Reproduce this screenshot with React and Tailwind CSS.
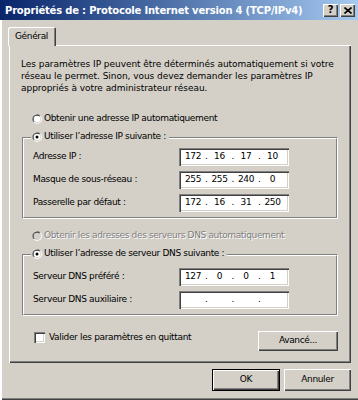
const raised = 'shadow-[inset_1px_1px_0_#fff,inset_-1px_-1px_0_#404040,inset_-2px_-2px_0_#808080]';
const sunken = 'shadow-[inset_1px_1px_0_#808080,inset_2px_2px_0_#404040,inset_-1px_-1px_0_#fff,inset_-2px_-2px_0_#d4d0c8]';

function Radio({ checked, disabled }) {
  return (
    <svg width="10" height="10" viewBox="0 0 12 12" className="shrink-0">
      <circle cx="6" cy="6" r="6" fill="#fff" />
      <path d="M1.76 10.24A6 6 0 0 1 10.24 1.76Z" fill="#808080" />
      <circle cx="6" cy="6" r="5" fill="#d4d0c8" />
      <path d="M2.46 9.54A5 5 0 0 1 9.54 2.46Z" fill="#404040" />
      <circle cx="6" cy="6" r="4" fill={disabled ? '#d4d0c8' : '#fff'} />
      {checked && <circle cx="6" cy="6" r="1.8" fill="#000" />}
    </svg>
  );
}

function IpField({ parts = ['', '', '', ''] }) {
  return (
    <div className={`flex h-[18px] w-[110px] items-center bg-white pl-[3px] ${sunken}`}>
      {parts.map((p, i) => (
        <div key={i} className="flex items-center">
          <span className="w-[22px] text-center">{p}</span>
          {i < 3 && <span className="w-[4.5px] text-center">.</span>}
        </div>
      ))}
    </div>
  );
}

function Row({ label, parts }) {
  return (
    <div className="flex h-[18px] items-center">
      <span className="w-[155px] pl-[9px]">{label}</span>
      <IpField parts={parts} />
    </div>
  );
}

function Group({ legend, children, className = '' }) {
  return (
    <div className={`ml-[1px] w-[316px] border border-t-[#808080] border-l-[#808080] border-r-white border-b-white ${className}`}>
      <div className="flex flex-col border border-t-white border-l-white border-r-[#808080] border-b-[#808080] pb-[5px]">
        <div className="-mt-[9px] ml-[7px] flex h-[14px] w-fit items-center gap-[2px] bg-[#d4d0c8] pl-[1px] pr-[3px]">
          <Radio checked />
          <span>{legend}</span>
        </div>
        {children}
      </div>
    </div>
  );
}

function TitleButton({ children }) {
  return (
    <div className={`flex h-[13px] w-[15px] items-center justify-center bg-[#d4d0c8] ${raised}`}>
      {children}
    </div>
  );
}

export default function App() {
  return (
    <div className="flex h-[400px] w-[358px] flex-col overflow-hidden bg-[#d4d0c8] font-['DejaVu_Sans',sans-serif] text-[9px] tracking-[-0.35px] text-black">
      <div className="flex h-[20px] shrink-0 items-center justify-between bg-linear-to-r from-[#0a246a] to-[#a6caf0] pl-[5px] pr-[3px]">
        <span className="text-[10px] font-bold tracking-[-0.2px] whitespace-nowrap text-white">
          Propriétés de : Protocole Internet version 4 (TCP/IPv4)
        </span>
        <div className="flex gap-[2px]">
          <TitleButton>
            <span className="text-[10px] leading-none font-bold">?</span>
          </TitleButton>
          <TitleButton>
            <svg width="8" height="7" viewBox="0 0 8 7">
              <path d="M0.5 0.5L7.5 6.5M7.5 0.5L0.5 6.5" stroke="#000" strokeWidth="1.6" />
            </svg>
          </TitleButton>
        </div>
      </div>

      <div className="flex flex-1 flex-col pt-[7px] pl-[9px] shadow-[inset_2px_0_0_#fff,inset_1px_0_0_#d4d0c8,inset_0_-1px_0_#404040,inset_0_-2px_0_#808080]">
        <div className="relative z-10 -mb-[1px] -ml-[1px] flex h-[19px] w-[48px] items-center rounded-t-[2px] bg-[#d4d0c8] pl-[7px] shadow-[inset_1px_1px_0_#fff,inset_-1px_0_0_#404040,inset_-2px_0_0_#808080]">
          Général
        </div>

        <div className={`flex h-[318px] w-[342px] flex-col pt-[13px] pl-[12px] ${raised}`}>
          <p className="leading-[12px] tracking-[-0.05px] whitespace-nowrap">
            Les paramètres IP peuvent être déterminés automatiquement si votre
            <br />
            réseau le permet. Sinon, vous devez demander les paramètres IP
            <br />
            appropriés à votre administrateur réseau.
          </p>

          <div className="mt-[17px] flex h-[16px] items-center gap-[2px] pl-[11px]">
            <Radio />
            <span>Obtenir une adresse IP automatiquement</span>
          </div>

          <Group legend="Utiliser l’adresse IP suivante :" className="mt-[10px]">
            <div className="mt-[4px] flex flex-col gap-[5px]">
              <Row label="Adresse IP :" parts={['172', '16', '17', '10']} />
              <Row label="Masque de sous-réseau :" parts={['255', '255', '240', '0']} />
              <Row label="Passerelle par défaut :" parts={['172', '16', '31', '250']} />
            </div>
          </Group>

          <div className="mt-[9px] flex h-[16px] items-center gap-[2px] pl-[11px]">
            <Radio disabled />
            <span className="text-[#808080] [text-shadow:1px_1px_0_#fff]">
              Obtenir les adresses des serveurs DNS automatiquement
            </span>
          </div>

          <Group legend="Utiliser l’adresse de serveur DNS suivante :" className="mt-[10px]">
            <div className="mt-[7px] flex flex-col gap-[5px]">
              <Row label="Serveur DNS préféré :" parts={['127', '0', '0', '1']} />
              <Row label="Serveur DNS auxiliaire :" />
            </div>
          </Group>

          <div className="mt-[15px] flex w-[317px] items-start justify-between">
            <div className="flex h-[13px] items-center gap-[4px] pl-[13px]">
              <div className={`h-[11px] w-[11px] bg-white ${sunken}`} />
              <span>Valider les paramètres en quittant</span>
            </div>
            <button className={`flex h-[20px] w-[80px] items-center justify-center bg-[#d4d0c8] ${raised}`}>
              Avancé...
            </button>
          </div>
        </div>

        <div className="mt-[6px] flex w-[342px] justify-end gap-[4px]">
          <button className="h-[22px] w-[68px] border border-black bg-[#d4d0c8]">
            <div className={`flex h-full w-full items-center justify-center ${raised}`}>OK</div>
          </button>
          <button className={`flex h-[22px] w-[67px] items-center justify-center bg-[#d4d0c8] ${raised}`}>
            Annuler
          </button>
        </div>
      </div>
    </div>
  );
}
